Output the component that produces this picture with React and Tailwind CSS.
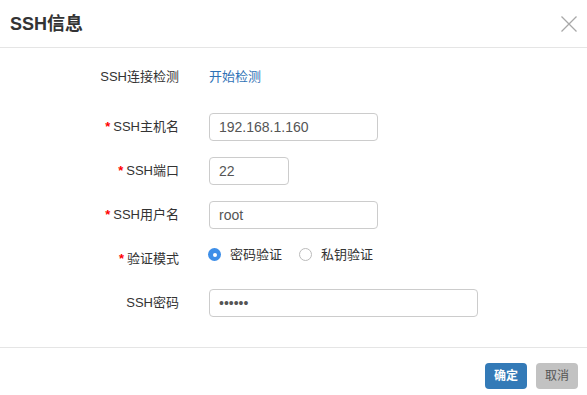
import React from "react";

const font = { fontFamily: '"Liberation Sans", "Noto Sans CJK SC", sans-serif' };

function Label({ required, children }) {
  return (
    <div className="w-[179px] shrink-0 text-right text-[13px] leading-[28px] text-[#333]">
      {required && <span className="mr-[3px] font-bold text-[#ff0000]">*</span>}
      {children}
    </div>
  );
}

function Input({ w, value, type = "text" }) {
  return (
    <input
      type={type}
      defaultValue={value}
      readOnly
      className={`${w} h-[28px] rounded-[4px] border border-[#cccccc] bg-white px-[9px] text-[14px] text-[#555] outline-none`}
      style={font}
    />
  );
}

function Radio({ checked, children }) {
  return (
    <div className="flex items-center">
      {checked ? (
        <span className="flex h-[13px] w-[13px] items-center justify-center rounded-full bg-[#3d8ee8]">
          <span className="h-[4px] w-[4px] rounded-full bg-white" />
        </span>
      ) : (
        <span className="h-[13px] w-[13px] rounded-full border border-[#bbbbbb] bg-white" />
      )}
      <span className="ml-[9px] text-[13px] leading-[17px] text-[#333]">{children}</span>
    </div>
  );
}

export default function App() {
  return (
    <div className="flex h-[395px] w-full flex-col overflow-hidden bg-white" style={font}>
      <div className="flex h-[48px] shrink-0 items-center justify-between border-b border-[#e5e5e5] pl-[10px] pr-[9px]">
        <div className="text-[18px] font-semibold leading-none text-[#333]">SSH信息</div>
        <svg width="18" height="18" viewBox="0 0 18 18" className="mt-[1px]">
          <path d="M1.5 1.5 L16.5 16.5 M16.5 1.5 L1.5 16.5" stroke="#a8a8a8" strokeWidth="1.3" fill="none" />
        </svg>
      </div>

      <div className="flex flex-1 flex-col pt-[15px]">
        <div className="flex items-center gap-[30px]">
          <Label>SSH连接检测</Label>
          <span className="text-[13px] text-[#2f72b6]">开始检测</span>
        </div>

        <div className="mt-[22px] flex items-center gap-[30px]">
          <Label required>SSH主机名</Label>
          <Input w="w-[169px]" value="192.168.1.160" />
        </div>

        <div className="mt-[16px] flex items-center gap-[30px]">
          <Label required>SSH端口</Label>
          <Input w="w-[80px]" value="22" />
        </div>

        <div className="mt-[16px] flex items-center gap-[30px]">
          <Label required>SSH用户名</Label>
          <Input w="w-[169px]" value="root" />
        </div>

        <div className="mt-[16px] flex items-start gap-[29px]">
          <Label required>验证模式</Label>
          <div className="mt-[1px] flex items-center gap-[17px]">
            <Radio checked>密码验证</Radio>
            <Radio>私钥验证</Radio>
          </div>
        </div>

        <div className="mt-[16px] flex items-center gap-[30px]">
          <Label>SSH密码</Label>
          <Input w="w-[269px]" type="password" value="123456" />
        </div>
      </div>

      <div className="flex h-[48px] shrink-0 items-start justify-end gap-[9px] border-t border-[#e5e5e5] pr-[9px] pt-[15px]">
        <button className="h-[26px] rounded-[4px] bg-[#337ab7] px-[9px] text-[12px] font-bold text-white">确定</button>
        <button className="h-[26px] rounded-[4px] bg-[#c2c2c2] px-[9px] text-[12px] text-[#555]">取消</button>
      </div>
    </div>
  );
}
